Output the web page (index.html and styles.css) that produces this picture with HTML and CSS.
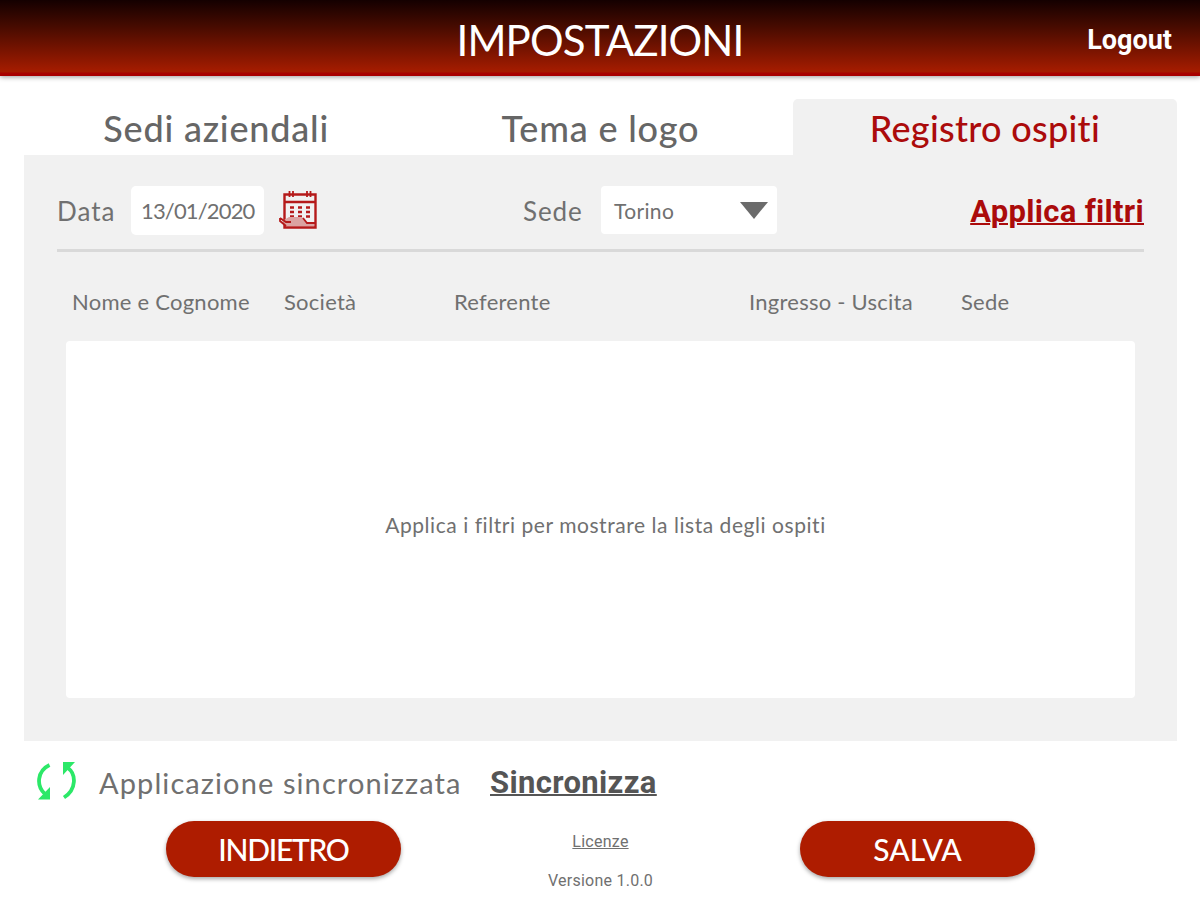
FILE: index.html
```html
<!DOCTYPE html>
<html lang="it">

<head>
  <meta charset="UTF-8">
  <meta name="viewport" content="width=device-width, initial-scale=1.0">
  <title>Impostazioni</title>
  <link rel="stylesheet" href="styles.css">
</head>

<body>
  <header class="topbar">
    <h1 class="title">IMPOSTAZIONI</h1>
    <a class="logout">Logout</a>
  </header>

  <main class="content">
    <nav class="tabs">
      <a class="tab">Sedi aziendali</a>
      <a class="tab">Tema e logo</a>
      <a class="tab active">Registro ospiti</a>
    </nav>

    <section class="panel">
      <div class="filters">
        <label class="label-data">Data</label>
        <div class="date-input">13/01/2020</div>
        <svg class="calendar" viewBox="0 0 40 40">
          <path d="M5.500 4.500H36.500V37.500H5.500ZM5.500 12H36.500" fill="none" stroke="#b51a1a" stroke-width="2.400" />
          <path d="M10.500 1V7M14 1V7M28 1V7M31.500 1V7" stroke="#b51a1a" stroke-width="1.800" />
          <path d="M11 17.500H31M11 22H31M11 26.500H31" stroke="#b51a1a" stroke-width="2.400" stroke-dasharray="4 4" />
          <path d="M1 28L5 30L10 27H23L28 33H35V36H7Z" fill="#dba3a1" />
          <path d="M1 28L7 32H12M1 28V31L7 36M24 28L28 33H36" fill="none" stroke="#b51a1a" stroke-width="1.800" />
        </svg>
        <label class="label-sede">Sede</label>
        <div class="select">
          <span>Torino</span>
          <svg class="arrow" viewBox="0 0 28 17"><path d="M0 0H28L14 17Z" fill="#6b6b6b" /></svg>
        </div>
        <a class="apply">Applica filtri</a>
      </div>

      <div class="columns">
        <div>Nome e Cognome</div>
        <div>Società</div>
        <div>Referente</div>
        <div>Ingresso - Uscita</div>
        <div>Sede</div>
      </div>

      <div class="list">
        <p class="empty">Applica i filtri per mostrare la lista degli ospiti</p>
      </div>
    </section>
  </main>

  <div class="sync">
    <svg class="sync-icon" viewBox="0 0 40 40">
      <path d="M12.500 3C0 9 -1 24 8 32M27 35.500C40 27 39 12 31 6" fill="none" stroke="#2ce868" stroke-width="3.800" />
      <path d="M1 37.500L13 25V37.500ZM26 0H38L26 13Z" fill="#2ce868" />
    </svg>
    <span class="sync-status">Applicazione sincronizzata</span>
    <a class="sync-link">Sincronizza</a>
  </div>

  <footer class="footer">
    <button class="btn btn-back">INDIETRO</button>
    <div class="info">
      <a class="licenses">Licenze</a>
      <span class="version">Versione 1.0.0</span>
    </div>
    <button class="btn">SALVA</button>
  </footer>
</body>

</html>
```
FILE: styles.css
```css
:root {
  --red: #ae1c00;
  --link: #ab0b0b;
  --panel: #f1f1f1;
  --text: #707070;
}

* {
  margin: 0;
  padding: 0;
  box-sizing: border-box;
}

body {
  width: 1200px;
  height: 900px;
  overflow: hidden;
  background: #fff;
  color: var(--text);
  font-family: Lato, sans-serif;
  white-space: nowrap;
}

.topbar {
  display: grid;
  grid-template-columns: 1fr auto 1fr;
  align-items: center;
  height: 76px;
  padding: 4px 28px 0;
  background: linear-gradient(#140000, #470b00 35%, #a51c00 94%, #a80000 97%);
  box-shadow: 0 1px 5px rgba(0, 0, 0, 0.4);
  color: #fff;
}

.title {
  grid-column: 2;
  font-size: 42px;
  font-weight: 400;
  letter-spacing: -0.85px;
}

.logout {
  justify-self: end;
  font-family: Roboto, sans-serif;
  font-size: 27px;
  font-weight: 700;
}

.content {
  padding: 23px 23px 0 24px;
}

.tabs {
  display: grid;
  grid-template-columns: repeat(3, 1fr);
  height: 56px;
}

.tab {
  display: flex;
  align-items: center;
  justify-content: center;
  padding-top: 2px;
  color: #666;
  font-size: 36px;
  font-weight: 500;
  letter-spacing: 0.8px;
}

.tab.active {
  background: var(--panel);
  border-radius: 5px 5px 0 0;
  color: var(--link);
  letter-spacing: 0.3px;
}

.panel {
  height: 586px;
  padding: 26px 33px 0;
  background: var(--panel);
}

.filters {
  display: flex;
  align-items: center;
  height: 71px;
  padding-bottom: 10px;
  border-bottom: 3px solid #d9d9d9;
  font-size: 26px;
}

.label-data {
  width: 74px;
  padding-top: 2px;
  letter-spacing: 1px;
}

.date-input {
  width: 133px;
  height: 49px;
  padding-left: 10px;
  background: #fff;
  border-radius: 5px;
  font-size: 22px;
  letter-spacing: -0.85px;
  line-height: 49px;
}

.calendar {
  width: 40px;
  height: 40px;
  margin-left: 15px;
}

.label-sede {
  width: 78px;
  margin-left: 204px;
  padding-top: 2px;
  letter-spacing: 0.9px;
}

.select {
  display: flex;
  align-items: center;
  justify-content: space-between;
  width: 176px;
  height: 48px;
  padding: 0 9px 0 13px;
  background: #fff;
  border-radius: 4px;
  font-size: 21px;
  letter-spacing: 0.35px;
}

.arrow {
  width: 28px;
  height: 17px;
}

.apply {
  margin-left: auto;
  padding-top: 2px;
  color: var(--link);
  font-family: Roboto, sans-serif;
  font-size: 31px;
  font-weight: 700;
  letter-spacing: 0.3px;
  text-decoration: underline;
  text-decoration-thickness: 2px;
}

.columns {
  display: grid;
  grid-template-columns: 212px 170px 295px 212px 1fr;
  align-items: center;
  height: 89px;
  padding: 9px 0 0 15px;
  font-size: 22px;
  letter-spacing: 0.25px;
}

.list {
  display: flex;
  align-items: center;
  justify-content: center;
  height: 357px;
  margin: 0 9px;
  padding: 10px 0 0 10px;
  background: #fff;
  border-radius: 4px;
}

.empty {
  font-size: 21px;
  letter-spacing: 0.55px;
}

.sync {
  display: flex;
  align-items: center;
  height: 80px;
  padding: 2px 0 0 37px;
  font-size: 29px;
}

.sync-icon {
  width: 40px;
  height: 40px;
  margin-right: 22px;
}

.sync-status {
  width: 391px;
  letter-spacing: 1.1px;
}

.sync-link {
  color: #555;
  font-family: Roboto, sans-serif;
  font-size: 31px;
  font-weight: 700;
  letter-spacing: 0.35px;
  text-decoration: underline;
  text-decoration-thickness: 2px;
}

.footer {
  display: flex;
  justify-content: space-between;
  padding: 0 165px 0 166px;
}

.btn {
  width: 235px;
  height: 56px;
  background: var(--red);
  border: none;
  border-radius: 28px;
  box-shadow: 0 2px 4px rgba(0, 0, 0, 0.35);
  color: #fff;
  font-family: inherit;
  font-size: 30px;
  font-weight: 500;
}

.btn-back {
  letter-spacing: -1.3px;
}

.info {
  display: flex;
  flex-direction: column;
  align-items: center;
  gap: 20px;
  padding-top: 11px;
  font-family: Roboto, sans-serif;
  font-size: 16px;
  letter-spacing: 0.25px;
}

.licenses {
  text-decoration: underline;
}
```
